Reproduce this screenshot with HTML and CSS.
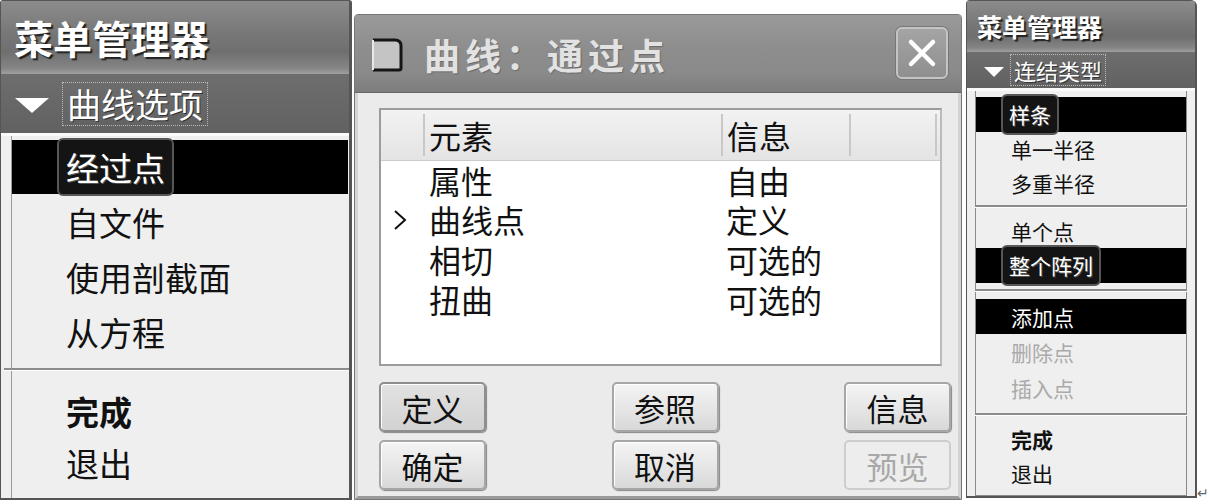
FILE: index.html
```html
<!DOCTYPE html>
<html lang="zh-CN">
<head>
    <meta charset="UTF-8">
    <title>菜单管理器 / 曲线：通过点</title>
    <link rel="stylesheet" href="styles.css">
</head>
<body>
    <div class="page">
        <!-- Left menu manager -->
        <div class="menu menu-lg">
            <div class="menu-title">菜单管理器</div>
            <div class="menu-sub"><span class="tri"></span><span class="focus">曲线选项</span></div>
            <div class="menu-body">
                <div class="item sel"><span class="hl">经过点</span></div>
                <div class="item">自文件</div>
                <div class="item">使用剖截面</div>
                <div class="item">从方程</div>
                <div class="sep"></div>
                <div class="item bold">完成</div>
                <div class="item">退出</div>
            </div>
        </div>

        <!-- Dialog -->
        <div class="dialog">
            <div class="dlg-title">
                <svg class="dlg-icon" width="34" height="36" viewBox="0 0 34 36">
                    <path d="M3 3 H25 Q31 3 31 9 V31 Q31 33 29 33 H3 Z" fill="#c4c4c4"/>
                    <path d="M3 3 H25 Q31 3 31 9 V31 Q31 33 29 33 H3" fill="none" stroke="#151515" stroke-width="3"/>
                    <path d="M3 3 V33" stroke="#e8e8e8" stroke-width="2"/>
                </svg>
                <span class="dlg-text">曲线：通过点</span>
                <div class="close">
                    <svg width="40" height="40" viewBox="0 0 40 40">
                        <path d="M9 9 L31 31 M31 9 L9 31" stroke="#fff" stroke-width="4.5" stroke-linecap="round"/>
                    </svg>
                </div>
            </div>
            <div class="dlg-body">
                <div class="list">
                    <div class="list-head">
                        <div class="col c0"></div>
                        <div class="col c1">元素</div>
                        <div class="col c2">信息</div>
                        <div class="col c3"></div>
                        <div class="col c4"></div>
                    </div>
                    <div class="row"><span class="mark"></span><span class="name">属性</span><span class="info">自由</span></div>
                    <div class="row"><span class="mark">
                        <svg width="14" height="22" viewBox="0 0 14 22"><path d="M2 2 L12 11 L2 20" fill="none" stroke="#111" stroke-width="2"/></svg>
                    </span><span class="name">曲线点</span><span class="info">定义</span></div>
                    <div class="row"><span class="mark"></span><span class="name">相切</span><span class="info">可选的</span></div>
                    <div class="row"><span class="mark"></span><span class="name">扭曲</span><span class="info">可选的</span></div>
                </div>
                <div class="btns">
                    <button class="btn active">定义</button>
                    <button class="btn">参照</button>
                    <button class="btn">信息</button>
                    <button class="btn">确定</button>
                    <button class="btn">取消</button>
                    <button class="btn disabled">预览</button>
                </div>
            </div>
        </div>

        <!-- Right menu manager -->
        <div class="menu menu-sm">
            <div class="menu-title">菜单管理器</div>
            <div class="menu-sub"><span class="tri"></span><span class="focus">连结类型</span></div>
            <div class="menu-body">
                <div class="item sel"><span class="hl">样条</span></div>
                <div class="item">单一半径</div>
                <div class="item">多重半径</div>
                <div class="sep"></div>
                <div class="item">单个点</div>
                <div class="item sel"><span class="hl">整个阵列</span></div>
                <div class="sep short"></div>
                <div class="item sel">添加点</div>
                <div class="item dim">删除点</div>
                <div class="item dim">插入点</div>
                <div class="sep wide"></div>
                <div class="item bold">完成</div>
                <div class="item">退出</div>
            </div>
        </div>
        <span class="ret">↵</span>
    </div>
</body>
</html>
```

FILE: styles.css
```css
/* Page */
body {
    margin: 0;
    background: #fff;
    font-family: "Noto Sans CJK SC", "Noto Sans", sans-serif;
    color: #111;
}

.page {
    display: flex;
    align-items: flex-start;
    width: 1210px;
    height: 504px;
}

/* Menu manager panels */
.menu {
    box-sizing: border-box;
    display: flex;
    flex-direction: column;
    background: #efefef;
    border: 1px solid #555;
    border-radius: 3px 3px 0 0;
}

.menu-title {
    color: #fff;
    font-weight: bold;
    text-shadow: 2px 2px 1px #222;
    background: linear-gradient(#8c8c8c, #777 45%, #6f6f6f 70%, #858585 92%, #a0a0a0);
}

.menu-sub {
    display: flex;
    align-items: center;
    background: linear-gradient(#6e6e6e, #616161);
    border-bottom: 3px solid #fafafa;
    color: #fff;
}

.tri {
    width: 0;
    height: 0;
    border-style: solid;
    border-color: #fff transparent transparent transparent;
}

.focus {
    outline: 1px dotted #bbb;
    outline-offset: 0;
    text-shadow: 1px 1px 0 #333;
}

.menu-body {
    flex: 1;
    border: 1px solid #8a8a8a;
    border-top: none;
    background: #efefef;
}

.item {
    display: flex;
    align-items: center;
    white-space: nowrap;
}

.item.sel {
    background: #000;
    color: #fff;
}

.item.bold {
    font-weight: bold;
}

.item.dim {
    color: #aaa;
}

.hl {
    background: #141414;
    border: 2px solid #575757;
    border-radius: 6px;
    color: #fff;
    text-shadow: 1px 1px 0 #555;
}

.sep {
    border-top: 2px solid #8c8c8c;
    border-bottom: 1px solid #fff;
}

/* Large (left) menu */
.menu-lg {
    width: 352px;
    height: 500px;
    border-width: 1px 3px 2px 1px;
}

.menu-lg .menu-title {
    height: 73px;
    line-height: 73px;
    padding-left: 13px;
    font-size: 39px;
}

.menu-lg .menu-sub {
    height: 59px;
    padding-left: 14px;
    font-size: 34px;
}

.menu-lg .tri {
    border-width: 15px 17px 0 17px;
    margin-right: 14px;
    margin-top: 4px;
}

.menu-lg .focus {
    padding: 0 4px;
    line-height: 42px;
}

.menu-lg .menu-body {
    margin: 0 0 0 10px;
    padding-top: 4px;
    border: none;
    border-left: 1px solid #9a9a9a;
}

.menu-lg .item {
    height: 55px;
    padding-left: 54px;
    font-size: 33px;
}

.menu-lg .item.sel {
    height: 54px;
    margin-right: 1px;
}

.menu-lg .hl {
    margin-left: -9px;
    padding: 0 7px;
    line-height: 54px;
}

.menu-lg .sep {
    margin: 9px 0 14px -8px;
}

.menu-lg .item.bold,
.menu-lg .sep ~ .item {
    height: 52px;
}

/* Small (right) menu */
.menu-sm {
    width: 231px;
    height: 498px;
    margin-left: 4px;
    border-width: 1px 2px 2px 1px;
    border-radius: 4px 6px 0 0;
}

.menu-sm .menu-title {
    height: 51px;
    line-height: 51px;
    padding-left: 10px;
    font-size: 25px;
}

.menu-sm .menu-sub {
    height: 36px;
    padding-left: 17px;
    font-size: 22px;
}

.menu-sm .tri {
    border-width: 10px 10px 0 10px;
    margin-right: 7px;
    margin-top: 3px;
}

.menu-sm .focus {
    padding: 0 3px;
    line-height: 30px;
}

.menu-sm .menu-body {
    margin: 0 8px 0 8px;
    padding-top: 6px;
}

.menu-sm .item {
    height: 34px;
    padding-left: 35px;
    font-size: 21px;
}

.menu-sm .item.sel {
    height: 35px;
}

.menu-sm .item.dim {
    height: 36px;
}

.menu-sm .hl {
    margin-left: -10px;
    padding: 0 6px;
    line-height: 37px;
}

.menu-sm .sep {
    margin: 5px -1px 6px -1px;
}

.menu-sm .sep.short {
    margin: 6px -1px 7px -1px;
}

.menu-sm .sep.wide {
    margin: 7px -1px 6px -1px;
}

/* Dialog window */
.dialog {
    box-sizing: border-box;
    width: 608px;
    height: 486px;
    margin-top: 14px;
    margin-left: 2px;
    display: flex;
    flex-direction: column;
    background: #ebebeb;
    border: 1px solid #777;
    border-radius: 4px 4px 0 0;
}

.dlg-title {
    height: 77px;
    display: flex;
    align-items: center;
    padding-left: 15px;
    background: linear-gradient(#9a9a9a, #8e8e8e 40%, #8a8a8a 75%, #7d7d7d);
    border-bottom: 1px solid #666;
}

.dlg-icon {
    margin-top: 2px;
}

.dlg-text {
    margin-left: 20px;
    font-size: 36px;
    font-weight: bold;
    letter-spacing: 5px;
    color: #e2e2e2;
    text-shadow: 1px 1px 1px #6a6a6a;
}

.close {
    width: 52px;
    height: 52px;
    margin-left: auto;
    margin-right: 13px;
    margin-top: -2px;
    display: flex;
    align-items: center;
    justify-content: center;
    box-sizing: border-box;
    border: 2px solid #c4c4c4;
    border-radius: 6px;
    background: linear-gradient(#a4a4a4, #8f8f8f);
    box-shadow: 0 0 0 1px #777;
}

.dlg-body {
    flex: 1;
    padding: 15px 10px 0 21px;
    border-left: 3px solid #d4d4d4;
    border-right: 3px solid #d4d4d4;
    border-bottom: 3px solid #9a9a9a;
}

.list {
    box-sizing: border-box;
    width: 563px;
    height: 258px;
    background: #fff;
    border: 2px solid #9c9c9c;
    border-right-color: #bbb;
}

.list-head {
    display: flex;
    height: 50px;
    background: linear-gradient(#f2f2f2, #e4e4e4);
    border-bottom: 1px solid #ccc;
    font-size: 32px;
}

.col {
    display: flex;
    align-items: center;
    border-right: 2px solid #c8c8c8;
    margin: 4px 0;
}

.col.c0 { width: 42px; }
.col.c1 { width: 292px; padding-left: 4px; }
.col.c2 { width: 122px; padding-left: 4px; }
.col.c3 { width: 84px; }
.col.c4 { flex: 1; border-right: none; }

.row {
    display: flex;
    align-items: center;
    height: 39px;
    line-height: 39px;
    font-size: 32px;
}

.row:nth-of-type(4),
.row:nth-of-type(5) {
    margin-top: 1px;
}

.mark {
    width: 48px;
    display: flex;
    justify-content: flex-end;
    padding-right: 22px;
    box-sizing: border-box;
}

.name {
    width: 297px;
}

.btns {
    display: grid;
    grid-template-columns: 107px 107px 107px;
    justify-content: space-between;
    row-gap: 8px;
    margin-top: 16px;
    margin-right: -3px;
}

.btn {
    height: 50px;
    padding: 0;
    font-family: inherit;
    font-size: 31px;
    color: #111;
    background: linear-gradient(#f4f4f4, #e4e4e4 60%, #d8d8d8);
    border: 2px solid #a6a6a6;
    border-radius: 5px;
    box-shadow: inset 1px 1px 0 #fff, 1px 1px 1px #888;
}

.btn.active {
    background: linear-gradient(#e2e2e2, #d2d2d2);
    border-color: #8e8e8e;
}

.btn.disabled {
    color: #a8a8a8;
    background: #ededed;
    border-color: #cdcdcd;
    box-shadow: none;
}

.ret {
    align-self: flex-end;
    margin-bottom: 2px;
    font-size: 14px;
    color: #666;
}
```
